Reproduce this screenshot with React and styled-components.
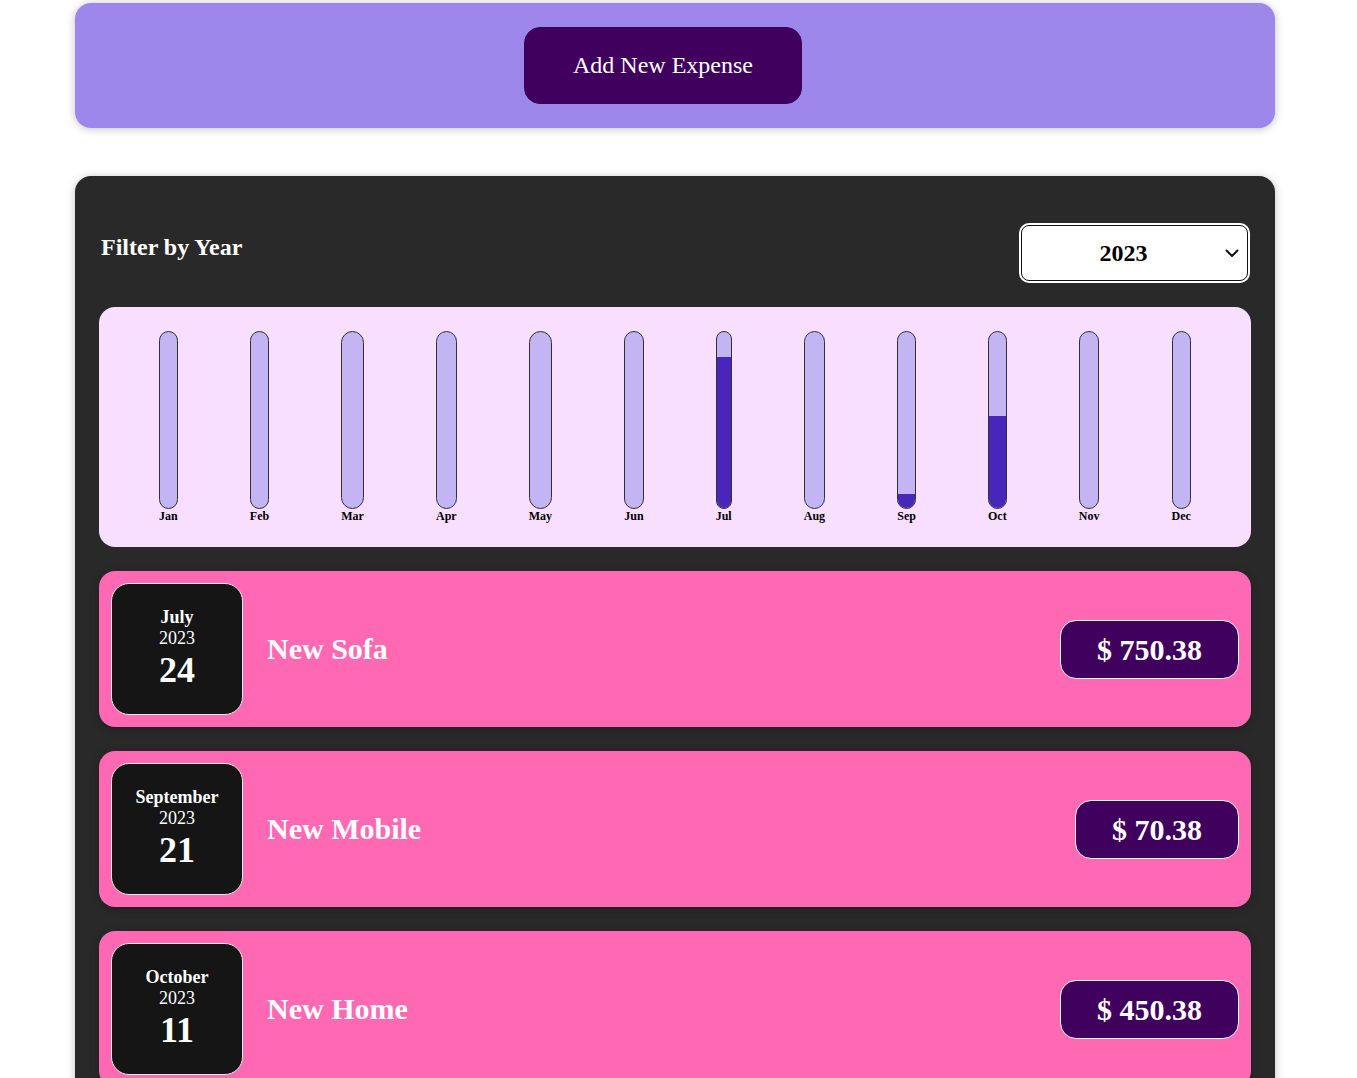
import React from "react";
import styled, { createGlobalStyle } from "styled-components";

const GlobalStyle = createGlobalStyle`
  html, body {
    margin: 0;
    padding: 0;
    background: #fff;
  }
  body {
    font-family: "Liberation Serif", "Times New Roman", serif;
  }
  * {
    box-sizing: border-box;
  }
`;

const months = ["Jan", "Feb", "Mar", "Apr", "May", "Jun", "Jul", "Aug", "Sep", "Oct", "Nov", "Dec"];

const expenses = [
  { id: "e1", title: "New Sofa", amount: 750.38, month: "July", monthIndex: 6, year: 2023, day: 24 },
  { id: "e2", title: "New Mobile", amount: 70.38, month: "September", monthIndex: 8, year: 2023, day: 21 },
  { id: "e3", title: "New Home", amount: 450.38, month: "October", monthIndex: 9, year: 2023, day: 11 },
];

const maxValue = 870;

const App = () => {
  const values = months.map((m, i) =>
    expenses.filter((e) => e.monthIndex === i).reduce((s, e) => s + e.amount, 0)
  );

  return (
    <Page>
      <GlobalStyle />
      <NewExpense>
        <AddButton>Add New Expense</AddButton>
      </NewExpense>

      <Expenses>
        <FilterRow>
          <FilterLabel>Filter by Year</FilterLabel>
          <SelectWrap>
            <YearSelect defaultValue="2023">
              <option value="2023">2023</option>
              <option value="2022">2022</option>
              <option value="2021">2021</option>
            </YearSelect>
            <Chevron width="14" height="9" viewBox="0 0 14 9">
              <path d="M1.5 1.5 L7 7 L12.5 1.5" fill="none" stroke="#111" strokeWidth="2" strokeLinecap="round" strokeLinejoin="round" />
            </Chevron>
          </SelectWrap>
        </FilterRow>

        <Chart>
          {months.map((m, i) => (
            <BarCol key={m}>
              <BarInner>
                <BarFill style={{ height: `${Math.round((values[i] / maxValue) * 100)}%` }} />
              </BarInner>
              <BarLabel>{m}</BarLabel>
            </BarCol>
          ))}
        </Chart>

        <List>
          {expenses.map((e) => (
            <Item key={e.id}>
              <DateBox>
                <DateMonth>{e.month}</DateMonth>
                <DateYear>{e.year}</DateYear>
                <DateDay>{e.day}</DateDay>
              </DateBox>
              <Title>{e.title}</Title>
              <Price>$ {e.amount}</Price>
            </Item>
          ))}
        </List>
      </Expenses>
    </Page>
  );
};

const Page = styled.div`
  width: 1350px;
  padding: 3px 0 40px;
`;

const NewExpense = styled.div`
  width: 1200px;
  margin: 0 auto;
  padding: 24px;
  background-color: #9d87ea;
  border-radius: 16px;
  text-align: center;
  box-shadow: 0 1px 8px rgba(0, 0, 0, 0.25);
`;

const AddButton = styled.button`
  font: inherit;
  font-size: 24px;
  line-height: 27px;
  cursor: pointer;
  padding: 24px 48px;
  border: 1px solid #40005d;
  background-color: #40005d;
  color: white;
  border-radius: 16px;
  margin-right: 24px;
`;

const Expenses = styled.div`
  width: 1200px;
  margin: 48px auto 0;
  padding: 24px;
  background-color: #292929;
  border-radius: 16px;
  box-shadow: 0 1px 8px rgba(0, 0, 0, 0.25);
`;

const FilterRow = styled.div`
  display: flex;
  align-items: center;
  justify-content: space-between;
  margin: 25px 0 26px;
  color: white;
`;

const FilterLabel = styled.label`
  font-size: 24px;
  font-weight: bold;
  margin-bottom: 12px;
  padding-left: 2px;
`;

const SelectWrap = styled.div`
  position: relative;
  margin-right: 3px;
`;

const YearSelect = styled.select`
  appearance: none;
  -webkit-appearance: none;
  font: inherit;
  font-size: 24px;
  font-weight: bold;
  width: 227px;
  height: 56px;
  padding: 0 46px 0 24px;
  text-align: center;
  text-align-last: center;
  color: #000;
  background: #fff;
  border: 1.5px solid #111;
  border-radius: 8px;
  box-shadow: 0 0 0 2px #fff;
  outline: none;
`;

const Chevron = styled.svg`
  position: absolute;
  right: 9px;
  top: 24px;
  pointer-events: none;
`;

const Chart = styled.div`
  height: 240px;
  padding: 24px;
  border-radius: 16px;
  background-color: #f8dfff;
  display: flex;
  justify-content: space-around;
`;

const BarCol = styled.div`
  height: 100%;
  display: flex;
  flex-direction: column;
  align-items: center;
`;

const BarInner = styled.div`
  flex: 1;
  width: 100%;
  border: 1px solid #313131;
  border-radius: 12px;
  background-color: #c3b4f3;
  overflow: hidden;
  display: flex;
  flex-direction: column;
  justify-content: flex-end;
`;

const BarFill = styled.div`
  width: 100%;
  background-color: #4826b9;
`;

const BarLabel = styled.div`
  font-size: 12px;
  line-height: 14px;
  font-weight: bold;
  text-align: center;
  color: #000;
`;

const List = styled.ul`
  list-style: none;
  margin: 0;
  padding: 0;
`;

const Item = styled.li`
  display: flex;
  align-items: center;
  padding: 12px;
  margin: 24px 0;
  border-radius: 16px;
  background-color: #ff69b4;
  box-shadow: 0 2px 8px rgba(0, 0, 0, 0.25);
`;

const DateBox = styled.div`
  display: flex;
  flex-direction: column;
  align-items: center;
  justify-content: center;
  width: 132px;
  height: 132px;
  flex-shrink: 0;
  border: 1px solid #ececec;
  background-color: #151515;
  color: white;
  border-radius: 18px;
`;

const DateMonth = styled.div`
  font-size: 18px;
  font-weight: bold;
`;

const DateYear = styled.div`
  font-size: 18px;
`;

const DateDay = styled.div`
  font-size: 36px;
  font-weight: bold;
`;

const Title = styled.h2`
  flex: 1;
  margin: 0 24px;
  font-size: 30px;
  font-weight: bold;
  color: white;
`;

const Price = styled.div`
  font-size: 30px;
  line-height: 33px;
  font-weight: bold;
  color: white;
  background-color: #40005d;
  border: 1px solid white;
  padding: 12px 36px;
  border-radius: 16px;
`;

export default App;
